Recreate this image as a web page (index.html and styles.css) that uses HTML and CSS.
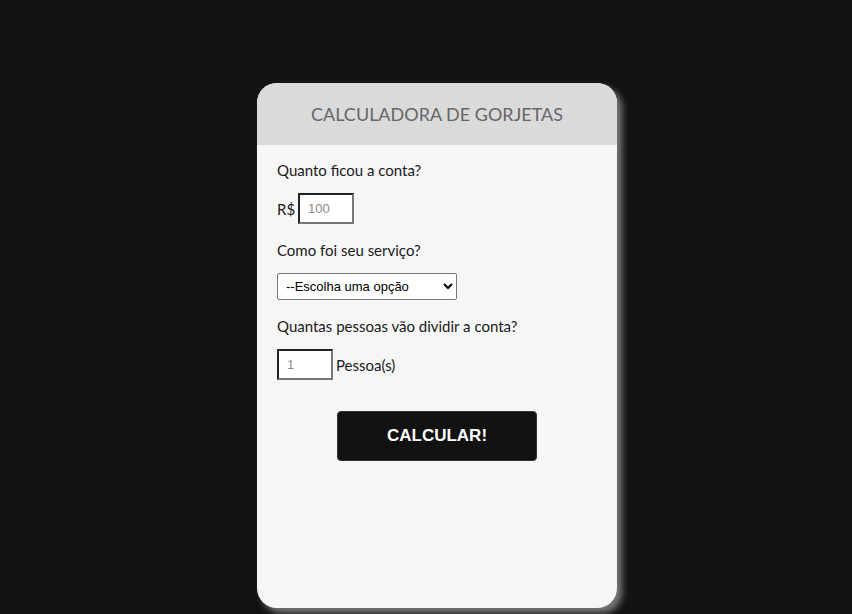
FILE: index.html
```html
<!DOCTYPE html>
<html lang="pt-BR">
<head>
<meta charset="utf-8">
<title>Calculadora de Gorjetas</title>
<link rel="stylesheet" href="styles.css">
</head>
<body>
<main class="card">
  <header class="card-header">
    <h1 class="title">CALCULADORA DE GORJETAS</h1>
  </header>
  <section class="card-body">
    <p class="label">Quanto ficou a conta?</p>
    <div class="row">
      <span class="unit">R$</span>
      <input class="field" type="text" placeholder="100">
    </div>
    <p class="label">Como foi seu serviço?</p>
    <div class="row">
      <select class="choice">
        <option>--Escolha uma opção</option>
      </select>
    </div>
    <p class="label">Quantas pessoas vão dividir a conta?</p>
    <div class="row">
      <input class="field" type="text" placeholder="1">
      <span class="unit">Pessoa(s)</span>
    </div>
    <div class="actions">
      <button class="btn" type="button">CALCULAR!</button>
    </div>
  </section>
</main>
</body>
</html>
```
FILE: styles.css
```css
html, body {
  margin: 0;
  padding: 0;
  background: #121212;
  height: 100%;
  overflow: hidden;
}
body {
  padding-top: 83px;
  box-sizing: border-box;
}
.card {
  width: 360px;
  height: 525px;
  margin: 0 auto;
  margin-left: 257px;
  background: #f6f6f6;
  border-radius: 20px;
  overflow: hidden;
  box-shadow: 5px 5px 7px #7a7a7a;
  font-family: Lato, "Liberation Sans", sans-serif;
}
.card-header {
  height: 62px;
  background: #dadada;
  display: flex;
  align-items: center;
  justify-content: center;
}
.title {
  margin: 0;
  font-size: 18px;
  font-weight: 400;
  color: #666;
  letter-spacing: 0;
}
.card-body {
  padding: 16px 20px 0;
}
.label {
  margin: 0 0 14px;
  font-size: 15px;
  line-height: 18px;
  color: #1a1a1a;
}
.row {
  display: flex;
  align-items: center;
  gap: 3px;
  margin-bottom: 17px;
  font-size: 15px;
  color: #1a1a1a;
}
.field {
  width: 56px;
  height: 31px;
  box-sizing: border-box;
  padding: 0 8px;
  border-style: solid;
  border-width: 2px;
  border-color: #222 #777 #777 #222;
  background: #fff;
  font-family: Arial, "Liberation Sans", sans-serif;
  font-size: 13px;
  color: #333;
}
.field::placeholder {
  color: #8a8a8a;
}
.choice {
  width: 180px;
  height: 27px;
  box-sizing: border-box;
  border: 1px solid #767676;
  border-radius: 2px;
  background: #fff;
  font-family: Arial, "Liberation Sans", sans-serif;
  font-size: 13px;
  color: #000;
  padding: 0 4px;
}
.actions {
  display: flex;
  justify-content: center;
  padding-top: 14px;
}
.btn {
  width: 200px;
  height: 50px;
  background: #121212;
  color: #fff;
  border: 1px solid #333;
  border-radius: 4px;
  font-family: Arial, "Liberation Sans", sans-serif;
  font-size: 17px;
  font-weight: 700;
  cursor: pointer;
}
```
